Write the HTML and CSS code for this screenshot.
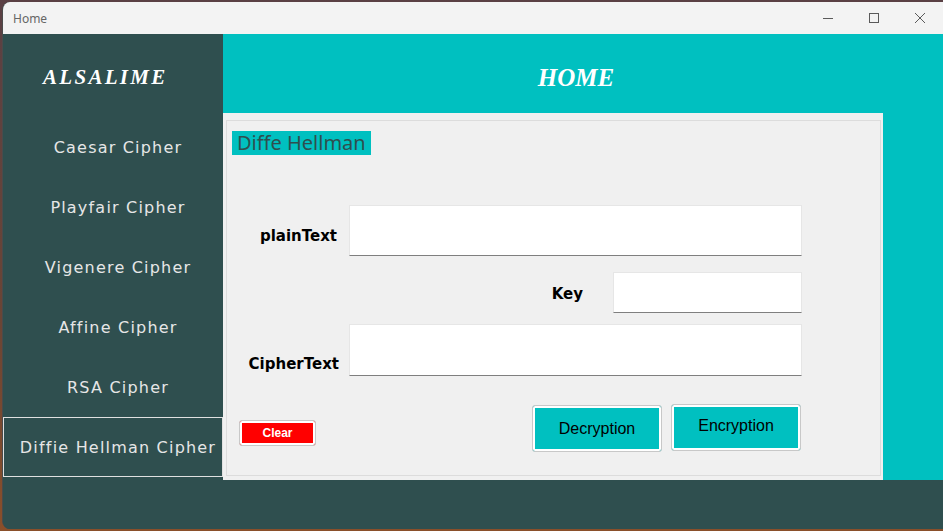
FILE: index.html
```html
<!DOCTYPE html>
<html lang="en">
<head>
<meta charset="utf-8">
<title>Home</title>
<link rel="stylesheet" href="styles.css">
</head>
<body>
<div class="window">
  <div class="titlebar">
    <span class="title">Home</span>
    <div class="controls">
      <span class="ctl"><svg width="10" height="10" viewBox="0 0 10 10"><path d="M0 5.5H10" stroke="#5a5a5a" stroke-width="1"/></svg></span>
      <span class="ctl"><svg width="10" height="10" viewBox="0 0 10 10"><rect x="0.5" y="0.5" width="9" height="9" fill="none" stroke="#5a5a5a" stroke-width="1"/></svg></span>
      <span class="ctl"><svg width="10" height="10" viewBox="0 0 10 10"><path d="M0 0L10 10M10 0L0 10" stroke="#5a5a5a" stroke-width="1"/></svg></span>
    </div>
  </div>
  <div class="main">
    <nav class="sidebar">
      <div class="brand">ALSALIME</div>
      <div class="nav-item">Caesar Cipher</div>
      <div class="nav-item">Playfair Cipher</div>
      <div class="nav-item">Vigenere Cipher</div>
      <div class="nav-item">Affine Cipher</div>
      <div class="nav-item">RSA Cipher</div>
      <div class="nav-item active">Diffie Hellman Cipher</div>
    </nav>
    <section class="content">
      <header class="header">HOME</header>
      <div class="panel">
        <div class="frame">
          <div class="frame-title">Diffe Hellman</div>
          <div class="row row-plain">
            <label class="lbl lbl-plain">plainText</label>
            <div class="field field-wide field-plain"></div>
          </div>
          <div class="row row-key">
            <label class="lbl lbl-key">Key</label>
            <div class="field field-key"></div>
          </div>
          <div class="row row-cipher">
            <label class="lbl lbl-cipher">CipherText</label>
            <div class="field field-wide field-cipher"></div>
          </div>
          <div class="row row-buttons">
            <button class="btn btn-clear">Clear</button>
            <button class="btn btn-teal btn-dec">Decryption</button>
            <button class="btn btn-teal btn-enc">Encryption</button>
          </div>
        </div>
      </div>
    </section>
  </div>
  <div class="footer"></div>
</div>
</body>
</html>
```

FILE: styles.css
```css
* { box-sizing: border-box; }
html, body { margin: 0; padding: 0; }
body {
  width: 943px;
  height: 531px;
  overflow: hidden;
  background: linear-gradient(180deg, #5a4044 0%, #6a4535 60%, #8a4f2a 100%);
}
.window {
  margin: 2px 0 0 2px;
  height: 527px;
  border-radius: 8px 0 0 8px;
  overflow: hidden;
  display: flex;
  flex-direction: column;
  border-left: 1px solid #4b4b4b;
  background: #2f4f4f;
}
.titlebar {
  height: 32px;
  flex: none;
  background: #f3f3f3;
  display: flex;
  align-items: center;
  justify-content: space-between;
}
.title {
  padding-left: 10px;
  font-family: "Noto Sans", "Liberation Sans", sans-serif;
  font-size: 12px;
  color: #666;
}
.controls { display: flex; height: 100%; }
.ctl {
  width: 46px;
  height: 100%;
  display: flex;
  align-items: center;
  justify-content: center;
}
.main {
  height: 446px;
  flex: none;
  display: flex;
}
.sidebar {
  width: 220px;
  flex: none;
  background: #2f4f4f;
  display: flex;
  flex-direction: column;
}
.brand {
  height: 83px;
  padding: 31px 0 0 40px;
  font-family: "Liberation Serif", serif;
  font-style: italic;
  font-weight: bold;
  font-size: 21px;
  letter-spacing: 2.3px;
  color: #ffffff;
}
.nav-item {
  height: 60px;
  padding-left: 10px;
  display: flex;
  align-items: center;
  justify-content: center;
  font-family: "DejaVu Sans", sans-serif;
  font-size: 16px;
  letter-spacing: 1.2px;
  color: #e6e6e6;
  border: 1px solid transparent;
}
.nav-item.active { border-color: #e0e0e0; }
.content {
  flex: 1;
  background: #00c0c0;
  display: flex;
  flex-direction: column;
}
.header {
  height: 79px;
  flex: none;
  padding: 30px 14px 0 0;
  text-align: center;
  font-family: "Liberation Serif", serif;
  font-style: italic;
  font-weight: bold;
  font-size: 25px;
  color: #ffffff;
}
.panel {
  width: 660px;
  height: 367px;
  background: #f0f0f0;
  padding: 7px 2px 4px 3px;
}
.frame {
  height: 100%;
  border: 1px solid #dcdcdc;
  display: flex;
  flex-direction: column;
}
.frame-title {
  align-self: flex-start;
  margin: 10px 0 0 5px;
  height: 24px;
  width: 139px;
  padding-left: 5px;
  background: #00c0c0;
  color: #2f4f4f;
  font-family: "Noto Sans", sans-serif;
  font-size: 20px;
  line-height: 24px;
}
.row {
  display: flex;
  padding-right: 78px;
}
.lbl {
  font-family: "DejaVu Sans", sans-serif;
  font-weight: bold;
  font-size: 15px;
  color: #000;
}
.field {
  background: #ffffff;
  border: 1px solid #e6e6e6;
  border-bottom: 1px solid #7f7f7f;
}
.field-wide { width: 453px; }
.row-plain { margin-top: 50px; height: 51px; }
.lbl-plain {
  width: 110px;
  text-align: right;
  margin-right: 12px;
  align-self: center;
  margin-top: 10px;
}
.row-key {
  margin-top: 16px;
  height: 41px;
  justify-content: flex-end;
}
.lbl-key {
  align-self: center;
  margin-right: 30px;
  margin-top: 3px;
}
.field-key { width: 189px; }
.row-cipher { margin-top: 11px; height: 52px; }
.lbl-cipher {
  width: 110px;
  text-align: right;
  align-self: flex-end;
  padding-bottom: 3px;
  margin-left: 2px;
  margin-right: 10px;
}
.row-buttons {
  margin-top: 28px;
  align-items: flex-start;
  padding-right: 79px;
}
.btn {
  border: 1px solid #c8c8c8;
  border-radius: 3px;
  box-shadow: inset 0 0 0 2px #ffffff;
  padding: 0;
  margin: 0;
  cursor: default;
}
.btn-clear {
  margin: 16px 0 0 12px;
  width: 77px;
  height: 26px;
  background: #ff0000;
  color: #ffffff;
  font-family: "Liberation Sans", sans-serif;
  font-weight: bold;
  font-size: 12px;
}
.btn-teal {
  width: 130px;
  height: 47px;
  background: #00c0c0;
  color: #000;
  font-family: "Liberation Sans", sans-serif;
  font-size: 16px;
}
.btn-dec { margin: 1px 0 0 auto; }
.btn-enc { margin-left: 9px; padding-bottom: 3px; }
.footer {
  flex: 1;
  background: #2f4f4f;
}
```
